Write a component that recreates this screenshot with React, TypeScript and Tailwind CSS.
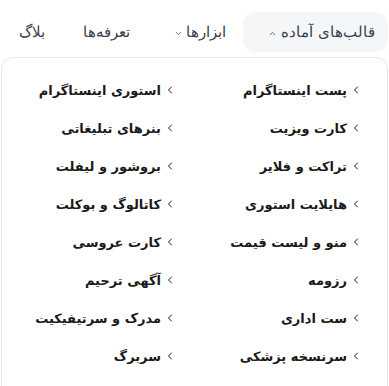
import { ChevronDown, ChevronUp, ChevronLeft } from 'lucide-react';

const rightCol = [
  'پست اینستاگرام',
  'کارت ویزیت',
  'تراکت و فلایر',
  'هایلایت استوری',
  'منو و لیست قیمت',
  'رزومه',
  'ست اداری',
  'سرنسخه پزشکی',
];

const leftCol = [
  'استوری اینستاگرام',
  'بنرهای تبلیغاتی',
  'بروشور و لیفلت',
  'کاتالوگ و بوکلت',
  'کارت عروسی',
  'آگهی ترحیم',
  'مدرک و سرتیفیکیت',
  'سربرگ',
];

function Item({ label }: { label: string }) {
  return (
    <div className="h-[38px] flex items-center gap-[3px]">
      <ChevronLeft className="w-[12px] h-[12px] text-gray-900 shrink-0" strokeWidth={2} />
      <span className="text-[13px] font-bold text-[#1a1a1a] leading-none">{label}</span>
    </div>
  );
}

export default function App() {
  return (
    <div
      dir="rtl"
      className="w-[389px] h-[386px] bg-white overflow-hidden"
      style={{ fontFamily: '"DejaVu Sans", sans-serif' }}
    >
      {/* Nav */}
      <div className="flex items-center h-[40px] mt-[12px] mr-[1px] text-[#374151]">
        <div className="h-full w-[145px] bg-[#f5f6f8] rounded-xl flex items-center pr-[13px] gap-[4px]">
          <span className="text-[15px] font-light">قالب‌های آماده</span>
          <ChevronUp className="w-[9px] h-[9px] mt-[3px]" strokeWidth={2} />
        </div>
        <div className="flex items-center gap-[3px] mr-[17px]">
          <span className="text-[15px] font-light">ابزارها</span>
          <ChevronDown className="w-[9px] h-[9px] mt-[3px]" strokeWidth={2} />
        </div>
        <span className="text-[15px] font-light mr-[44px]">تعرفه‌ها</span>
        <span className="text-[15px] font-light mr-[38px]">بلاگ</span>
      </div>

      {/* Dropdown panel */}
      <div className="mt-[5px] mx-[1px] border border-gray-200 rounded-xl h-[400px] pt-[13px] pr-[25px]">
        <div className="grid grid-cols-[186px_186px]">
          <div className="flex flex-col">
            {rightCol.map((l) => (
              <Item key={l} label={l} />
            ))}
          </div>
          <div className="flex flex-col">
            {leftCol.map((l) => (
              <Item key={l} label={l} />
            ))}
          </div>
        </div>
      </div>
    </div>
  );
}
